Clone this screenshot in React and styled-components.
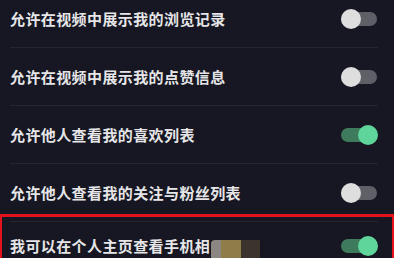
import React from "react";
import styled, { createGlobalStyle } from "styled-components";

const Global = createGlobalStyle`
  html, body { margin: 0; padding: 0; background: #161722; overflow: hidden; }
  body { font-family: "Noto Sans CJK SC", "Noto Sans", sans-serif; }
`;

const Page = styled.div`
  position: relative;
  width: 394px;
  height: 258px;
  overflow: hidden;
  background: #161722;
`;

const List = styled.div`
  display: flex;
  flex-direction: column;
  margin-top: -10px;
  padding: 0 16px 0 10px;
`;

const Row = styled.div`
  display: flex;
  align-items: center;
  justify-content: space-between;
  height: ${(p) => p.$h || 57}px;
  border-bottom: ${(p) => (p.$last ? "none" : "1px solid #23252f")};
`;

const Label = styled.span`
  display: flex;
  align-items: flex-start;
  height: 20px;
  font-size: 15px;
  letter-spacing: 0.4px;
  font-weight: 700;
  color: #e6e6e8;
  line-height: 20px;
`;

const Mosaic = styled.span`
  display: flex;
  margin-top: 4px;
  margin-left: 1px;
  height: 26px;
`;

const Pixel = styled.span`
  display: block;
  width: ${(p) => p.$w}px;
  height: 100%;
  background: ${(p) => p.$c};
  border-radius: ${(p) => p.$r || "0"};
`;

const Track = styled.span`
  position: relative;
  display: block;
  width: 36px;
  height: 14px;
  border-radius: 7px;
  background: ${(p) => (p.$on ? "#3e7b5c" : "#5e5f67")};
  margin-right: 1px;
`;

const Knob = styled.span`
  position: absolute;
  top: -3px;
  ${(p) => (p.$on ? "right: -1px;" : "left: 0;")}
  width: 20px;
  height: 20px;
  border-radius: 50%;
  background: ${(p) => (p.$on ? "#5fd59b" : "#dededf")};
`;

const Highlight = styled.div`
  position: absolute;
  left: -1px;
  top: 214px;
  width: 390px;
  height: 60px;
  border: 3px solid #e3121c;
  pointer-events: none;
`;

const Toggle = ({ on }) => (
  <Track $on={on}>
    <Knob $on={on} />
  </Track>
);

const items = [
  { text: "允许在视频中展示我的浏览记录", on: false },
  { text: "允许在视频中展示我的点赞信息", on: false },
  { text: "允许他人查看我的喜欢列表", on: true },
  { text: "允许他人查看我的关注与粉丝列表", on: false },
];

export default function App() {
  return (
    <Page>
      <Global />
      <List>
        {items.map((it) => (
          <Row key={it.text}>
            <Label>{it.text}</Label>
            <Toggle on={it.on} />
          </Row>
        ))}
        <Row $h={48} $last>
          <Label>
            我可以在个人主页查看手机相
            <Mosaic>
              <Pixel $w={10} $c="#8b8681" $r="4px 0 0 0" />
              <Pixel $w={20} $c="#8e7d49" />
              <Pixel $w={19} $c="#3b332c" />
            </Mosaic>
          </Label>
          <Toggle on />
        </Row>
      </List>
      <Highlight />
    </Page>
  );
}
